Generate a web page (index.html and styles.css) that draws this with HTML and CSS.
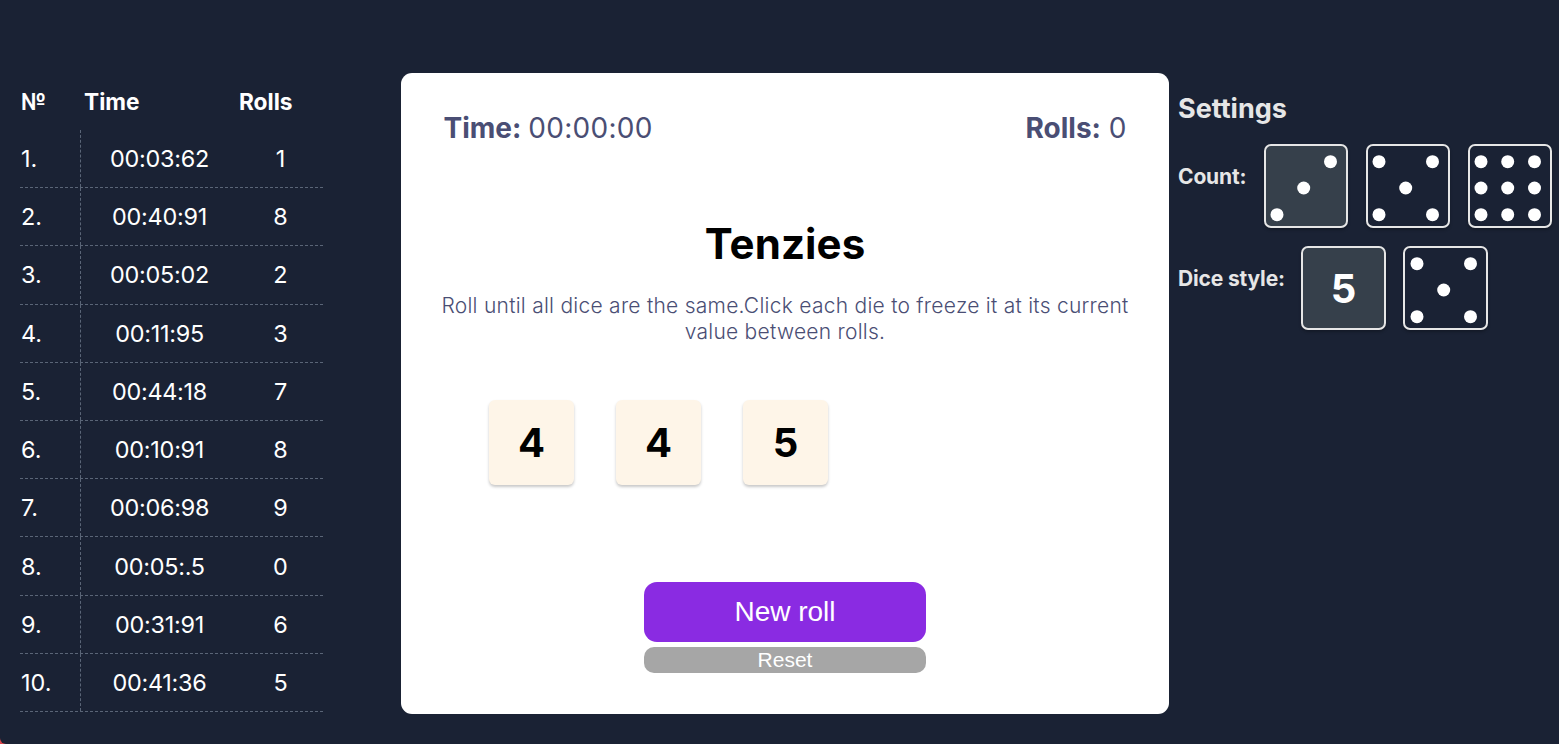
FILE: index.html
```
<!DOCTYPE html>
<html lang="en">
<head>
<meta charset="utf-8">
<title>Tenzies</title>
<link rel="stylesheet" href="styles.css">
</head>
<body>
<svg width="0" height="0" class="defs">
  <symbol id="five" viewBox="0 0 80 80"><circle cx="11" cy="15.7" r="6.5"/><circle cx="64.5" cy="15.7" r="6.5"/><circle cx="37.7" cy="42" r="6.5"/><circle cx="11" cy="68.7" r="6.5"/><circle cx="64.5" cy="68.7" r="6.5"/></symbol>
</svg>
<div class="app">
  <section class="scores">
    <div class="row head"><span>№</span><span>Time</span><span>Rolls</span></div>
    <div class="row"><span>1.</span><span>00:03:62</span><span>1</span></div>
    <div class="row"><span>2.</span><span>00:40:91</span><span>8</span></div>
    <div class="row"><span>3.</span><span>00:05:02</span><span>2</span></div>
    <div class="row"><span>4.</span><span>00:11:95</span><span>3</span></div>
    <div class="row"><span>5.</span><span>00:44:18</span><span>7</span></div>
    <div class="row"><span>6.</span><span>00:10:91</span><span>8</span></div>
    <div class="row"><span>7.</span><span>00:06:98</span><span>9</span></div>
    <div class="row"><span>8.</span><span>00:05:.5</span><span>0</span></div>
    <div class="row"><span>9.</span><span>00:31:91</span><span>6</span></div>
    <div class="row"><span>10.</span><span>00:41:36</span><span>5</span></div>
  </section>
  <main class="card">
    <div class="stats"><div><b>Time:</b> <span class="clock">00:00:00</span></div><div><b>Rolls:</b> 0</div></div>
    <h1 class="title">Tenzies</h1>
    <p class="intro">Roll until all dice are the same.Click each die to freeze it at its current value between rolls.</p>
    <div class="dice"><div class="die">4</div><div class="die">4</div><div class="die">5</div></div>
    <button class="roll">New roll</button>
    <button class="reset">Reset</button>
  </main>
  <aside class="settings">
    <h2 class="settings-title">Settings</h2>
    <div class="option">
      <span class="label count">Count:</span>
      <div class="choice selected"><svg viewBox="0 0 80 80"><circle cx="64.5" cy="15.7" r="6.5"/><circle cx="37.7" cy="42" r="6.5"/><circle cx="11" cy="68.7" r="6.5"/></svg></div>
      <div class="choice"><svg><use href="#five"/></svg></div>
      <div class="choice"><svg viewBox="0 0 80 80"><circle cx="11" cy="15.7" r="6.5"/><circle cx="37.7" cy="15.7" r="6.5"/><circle cx="64.5" cy="15.7" r="6.5"/><circle cx="11" cy="42" r="6.5"/><circle cx="37.7" cy="42" r="6.5"/><circle cx="64.5" cy="42" r="6.5"/><circle cx="11" cy="68.7" r="6.5"/><circle cx="37.7" cy="68.7" r="6.5"/><circle cx="64.5" cy="68.7" r="6.5"/></svg></div>
    </div>
    <div class="option wide">
      <span class="label style">Dice style:</span>
      <div class="choice selected">5</div>
      <div class="choice"><svg><use href="#five"/></svg></div>
    </div>
  </aside>
</div>
</body>
</html>
```
FILE: styles.css
```
* { box-sizing: border-box; }
body { margin: 0; background: #d9444a; font-family: Inter, "Liberation Sans", sans-serif; overflow: hidden; }
.defs { display: block; height: 0; }
.app {
  height: 744px;
  display: grid;
  grid-template-columns: 401px 768px 390px;
  align-items: start;
  background: #1a2234;
  border-bottom-left-radius: 6px;
}
.scores { width: 303px; margin: 74px 0 0 20px; color: #fff; font-size: 23.4px; }
.row {
  display: grid;
  grid-template-columns: 61px 157px 85px;
  height: 58.22px;
  border-bottom: 1px dashed #5a6577;
}
.row span { display: flex; align-items: center; justify-content: center; }
.row span:nth-child(2) { letter-spacing: -.25px; }
.row span:first-child { justify-content: flex-start; padding-left: 1px; border-right: 1px dashed #5a6577; }
.row.head { height: 55.9px; border: 0; font-weight: 700; font-size: 22.7px; }
.row.head span { justify-content: flex-start; padding-left: 1px; border: 0; letter-spacing: 0; }
.row.head span:nth-child(2) { padding-left: 3px; }
.card {
  height: 641px;
  margin-top: 73px;
  padding: 38px 40px 0;
  border-radius: 11px;
  background: #fff;
  display: flex;
  flex-direction: column;
  align-items: center;
}
.stats { align-self: stretch; display: flex; justify-content: space-between; padding: 0 2.5px; font-size: 28px; line-height: 34px; color: #4a4e74; }
.clock { letter-spacing: .3px; margin-left: -1px; }
.title { margin: 74px 0 0; font-size: 42px; line-height: 50px; font-weight: 700; letter-spacing: .1px; color: #000; }
.intro { margin: 24px -5px 0; font-size: 21px; line-height: 26px; font-weight: 300; letter-spacing: .26px; text-align: center; color: #4a4e74; }
.dice { align-self: flex-start; display: flex; gap: 42px; margin: 55px 0 0 48px; }
.die {
  width: 85px; height: 85px;
  display: flex; align-items: center; justify-content: center;
  border-radius: 6px;
  background: #fef5e8;
  box-shadow: 0 2px 3px rgba(0,0,0,.22);
  font-size: 40px; font-weight: 700;
}
button { width: 282px; border: 0; padding: 0; color: #fff; font-family: "Liberation Sans", Arial, sans-serif; }
.roll { height: 60px; margin-top: 97px; border-radius: 13px; background: #8a2be2; font-size: 28px; }
.reset { height: 26px; margin-top: 5px; border-radius: 10px; background: #a6a6a6; font-size: 21px; line-height: 26px; }
.settings { padding: 93px 0 0 9px; color: #e6e6e6; }
.settings-title { margin: 0 0 19px; font-size: 27px; line-height: 32px; font-weight: 700; }
.option { display: flex; gap: 18px; margin-bottom: 18px; }
.label { height: 66px; line-height: 66px; font-size: 21px; font-weight: 700; letter-spacing: -.15px; white-space: nowrap; }
.label.count { width: 68px; }
.label.style { width: 105px; }
.choice {
  flex: none;
  width: 84px; height: 84px;
  display: flex; align-items: center; justify-content: center;
  border: 2px solid #e6e6e6;
  border-radius: 7px;
  box-shadow: 0 2px 3px rgba(0,0,0,.25);
  color: #fff; font-size: 40px; font-weight: 700;
}
.wide .choice { width: 85px; }
.wide .choice + .choice { margin-left: -1px; }
.choice.selected { background: #36404b; }
.choice svg { width: 80px; height: 80px; fill: #fff; }
```
